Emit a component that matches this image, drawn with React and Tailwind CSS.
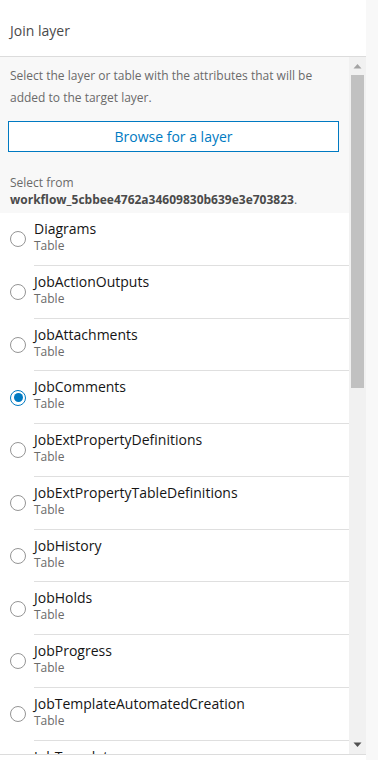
import React from 'react';

const tables = [
  'Diagrams',
  'JobActionOutputs',
  'JobAttachments',
  'JobComments',
  'JobExtPropertyDefinitions',
  'JobExtPropertyTableDefinitions',
  'JobHistory',
  'JobHolds',
  'JobProgress',
  'JobTemplateAutomatedCreation',
  'JobTemplates',
];

function Radio({ checked }) {
  if (checked) {
    return (
      <span className="w-4 h-4 rounded-full border-[1.5px] border-[#007ac2] flex items-center justify-center shrink-0">
        <span className="w-[9px] h-[9px] rounded-full bg-[#007ac2]" />
      </span>
    );
  }
  return <span className="w-4 h-4 rounded-full border border-[#959595] shrink-0" />;
}

function Row({ name, checked }) {
  return (
    <div className="flex items-center h-[52.75px] pl-[10px]">
      <Radio checked={checked} />
      <div className="ml-2 flex-1 h-full border-b border-[#dfdfdf] pt-[7px]">
        <div className="text-[14px] leading-[17px] text-[#151515]">{name}</div>
        <div className="text-[12px] leading-[18px] text-[#6a6a6a]">Table</div>
      </div>
    </div>
  );
}

export default function App() {
  return (
    <div className="w-[378px] h-[760px] bg-[#f8f8f8] flex overflow-hidden" style={{ fontFamily: '"Open Sans", sans-serif' }}>
      <div className="w-[366px] h-[760px] bg-white flex flex-col">
        <div className="h-[57px] shrink-0 border-b border-[#dcdcdc] flex items-center px-[10px] pt-[5px]">
          <span className="text-[14px] text-[#4a4a4a]">Join layer</span>
        </div>
        <div className="h-[698px] flex border-b border-[#dcdcdc]">
          <div className="flex-1 overflow-hidden">
            <div className="bg-[#f8f8f8] pt-[8px] pb-[5px]">
              <p className="px-[10px] text-[12px] leading-[22px] text-[#6a6a6a]">
                Select the layer or table with the attributes that will be added to the target layer.
              </p>
              <button className="ml-2 mt-[12px] w-[331px] h-[31px] border border-[#007ac2] bg-white text-[14px] text-[#007ac2]">
                Browse for a layer
              </button>
              <div className="px-[10px] mt-[22px] text-[12px] leading-[17px] text-[#6a6a6a]">
                <div>Select from</div>
                <div>
                  <span className="font-bold text-[#4a4a4a]">workflow_5cbbee4762a34609830b639e3e703823</span>.
                </div>
              </div>
            </div>
            {tables.map((t) => (
              <Row key={t} name={t} checked={t === 'JobComments'} />
            ))}
          </div>
          <div className="w-[17px] bg-[#f1f1f1] flex flex-col items-center">
            <svg width="9" height="17" viewBox="0 0 9 17" className="mt-[1px]">
              <path d="M0.5 10.5 L4.5 6 L8.5 10.5 Z" fill="#a3a3a3" />
            </svg>
            <div className="w-[13px] h-[313px] bg-[#c1c1c1]" />
            <div className="flex-1" />
            <svg width="9" height="17" viewBox="0 0 9 17" className="mb-[1px]">
              <path d="M0.5 6.5 L4.5 11 L8.5 6.5 Z" fill="#505050" />
            </svg>
          </div>
        </div>
      </div>
    </div>
  );
}
